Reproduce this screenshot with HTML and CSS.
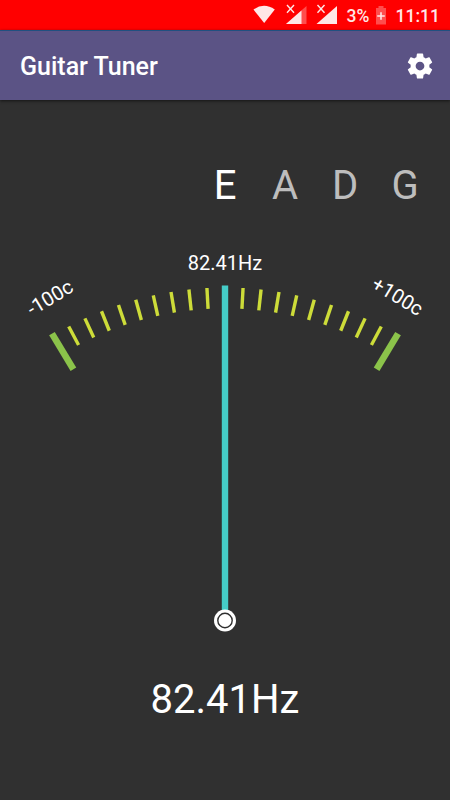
FILE: index.html
```html
<!DOCTYPE html>
<html lang="en">
<head>
    <meta charset="UTF-8">
    <meta name="viewport" content="width=device-width, initial-scale=1.0">
    <title>Guitar Tuner</title>
    <link rel="stylesheet" href="styles.css">
</head>
<body>
    <div class="status-bar">
        <svg class="status-icons" width="92" height="30" viewBox="0 0 92 30">
            <!-- wifi -->
            <path d="M1.500 9.500Q12 2 22.800 9.500L12.200 23Z"/>
            <!-- signal 1 -->
            <path class="dim" d="M34 24L54.500 6V24Z"/>
            <path d="M34 24L49.500 10.400V24Z"/>
            <path class="cross" d="M35 5L42 12.800M42 5L35 12.800"/>
            <!-- signal 2 -->
            <path d="M64.500 24L85 6V24Z"/>
            <path class="cross" d="M65.500 5L72.500 12.800M72.500 5L65.500 12.800"/>
        </svg>
        <span class="percent">3%</span>
        <svg class="battery" width="12" height="19" viewBox="0 0 12 19">
            <path class="dim" d="M3.500 0H8.500V2H11V18.500H1V2H3.500Z"/>
            <path d="M5.200 6.200H6.800V9.200H9.800V10.800H6.800V13.800H5.200V10.800H2.200V9.200H5.200Z"/>
        </svg>
        <span class="clock">11:11</span>
    </div>

    <header class="toolbar">
        <h1>Guitar Tuner</h1>
        <svg class="settings" width="30" height="30" viewBox="0 0 24 24">
            <path d="M19.430 12.980c.04-.32.07-.64.07-.98s-.03-.66-.07-.98l2.110-1.650c.19-.15.24-.42.12-.64l-2-3.460c-.12-.22-.39-.3-.61-.22l-2.490 1c-.52-.4-1.080-.73-1.690-.98l-.38-2.650C14.460 2.180 14.250 2 14 2h-4c-.25 0-.46.18-.49.42l-.38 2.650c-.61.25-1.170.59-1.690.98l-2.490-1c-.23-.09-.49 0-.61.22l-2 3.460c-.13.22-.07.49.12.64l2.110 1.650c-.04.32-.07.65-.07.98s.03.66.07.98l-2.110 1.650c-.19.15-.24.42-.12.64l2 3.460c.12.22.39.3.61.22l2.490-1c.52.4 1.080.73 1.690.98l.38 2.650c.03.24.24.42.49.42h4c.25 0 .46-.18.49-.42l.38-2.650c.61-.25 1.170-.59 1.690-.98l2.490 1c.23.09.49 0 .61-.22l2-3.460c.12-.22.07-.49-.12-.64l-2.110-1.650zM12 15.500c-1.930 0-3.500-1.570-3.500-3.500s1.570-3.500 3.500-3.500 3.500 1.570 3.500 3.500-1.570 3.500-3.500 3.500z"/>
        </svg>
    </header>

    <main>
        <div class="strings">
            <span class="note active">E</span>
            <span class="note">A</span>
            <span class="note">D</span>
            <span class="note">G</span>
        </div>

        <!-- the origin is the pivot of the needle -->
        <svg class="gauge" width="450" height="400" viewBox="-225 -380.500 450 400">
            <g id="ticks"></g>
            <text x="0" y="-350.500" text-anchor="middle">82.41Hz</text>
            <text x="-8" y="-360" transform="rotate(-31.100)">-100c</text>
            <text x="8" y="-360" text-anchor="end" transform="rotate(31.100)">+100c</text>
            <rect class="needle" x="-3.200" y="-335" width="6.400" height="327"/>
            <circle class="knob" r="11"/>
            <circle class="knob-ring" r="7.200"/>
        </svg>

        <div class="frequency">82.41Hz</div>
    </main>

    <script>
        var ticks = document.getElementById("ticks");

        for (var i = -10; i <= 10; i++) {
            if (i === 0) continue;
            var end = Math.abs(i) === 10;
            var line = document.createElementNS("http://www.w3.org/2000/svg", "line");
            line.setAttribute("y1", end ? -335 : -333);
            line.setAttribute("y2", end ? -293.5 : -312);
            line.setAttribute("class", end ? "tick-end" : "tick");
            line.setAttribute("transform", "rotate(" + (i * 3.11) + ")");
            ticks.appendChild(line);
        }
    </script>
</body>
</html>
```
FILE: styles.css
```css
body {
    margin: 0;
    height: 800px;
    overflow: hidden;
    background-color: #303030;
    color: white;
    font-family: Roboto, "Liberation Sans", sans-serif;
}
.status-bar {
    display: flex;
    height: 30px;
    padding-left: 252px;
    background-color: #ff0000;
    color: #ffe6e6;
    font-size: 17.5px;
    font-weight: 500;
    line-height: 32px;
}
.status-bar svg {
    fill: #ffe6e6;
}
.status-bar .dim {
    fill: #ff4d4d;
}
.status-bar .cross {
    fill: none;
    stroke: #ffe6e6;
    stroke-width: 1.4;
}
.percent {
    width: 28px;
    margin-left: 2.5px;
}
.battery {
    margin-top: 6px;
}
.clock {
    margin-left: 9px;
}
.toolbar {
    display: flex;
    justify-content: space-between;
    align-items: center;
    box-sizing: border-box;
    height: 70px;
    padding: 0 15px 0 20px;
    border-top: 1px solid #205080;
    background-color: #5b5385;
    box-shadow: 0 1px 3px rgba(0, 0, 0, 0.6);
}
.toolbar h1 {
    margin: 2px 0 0;
    font-size: 25px;
    font-weight: 500;
}
.settings {
    fill: white;
}
.strings {
    display: flex;
    justify-content: flex-end;
    height: 58px;
    padding: 62px 15px 20px 0;
}
.note {
    width: 60px;
    color: #bdbdbd;
    font-size: 40px;
    line-height: 48px;
    text-align: center;
}
.note.active {
    color: white;
}
.gauge {
    display: block;
    fill: white;
    font-size: 20px;
}
.tick {
    stroke: #cddc39;
    stroke-width: 3.4;
}
.tick-end {
    stroke: #8bc34a;
    stroke-width: 6.6;
}
.needle {
    fill: #45ccc7;
}
.knob {
    fill: white;
}
.knob-ring {
    fill: none;
    stroke: #303030;
    stroke-width: 1.4;
}
.frequency {
    margin-top: 36px;
    font-size: 40px;
    line-height: 48px;
    text-align: center;
}
```
